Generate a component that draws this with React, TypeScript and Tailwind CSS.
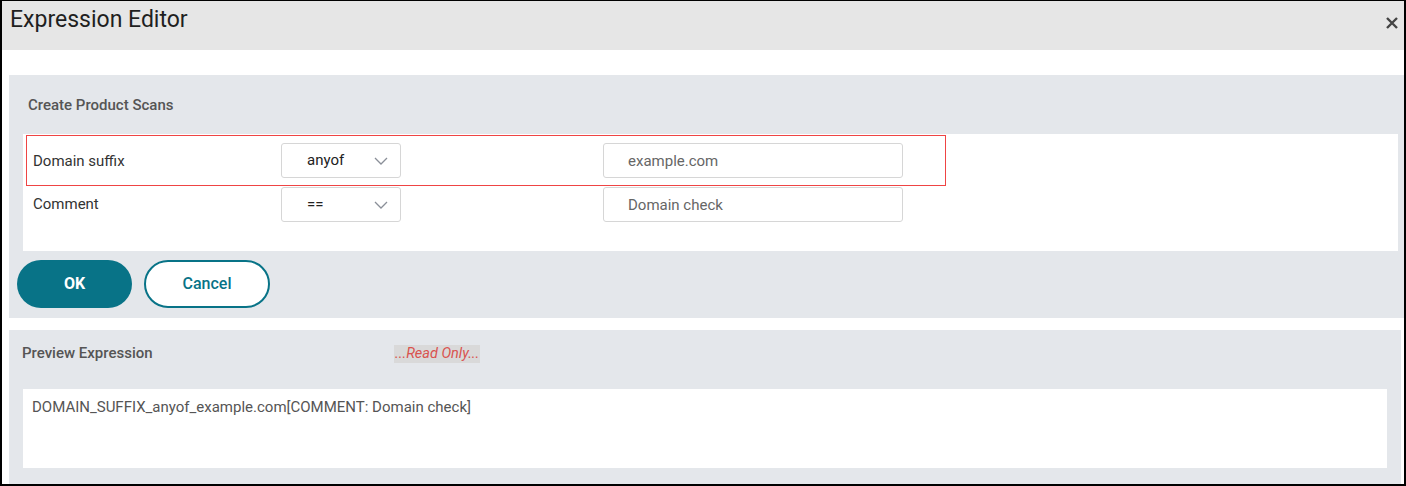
function Chevron() {
  return (
    <svg width="14" height="8" viewBox="0 0 14 8" fill="none" className="text-[#8a8f98]">
      <path d="M1 1l6 6 6-6" stroke="currentColor" strokeWidth="1.3" />
    </svg>
  );
}

function Select({ value }: { value: string }) {
  return (
    <div className="w-[120px] h-[35px] border border-[#d6d6d6] rounded-[3px] bg-white flex items-center justify-between pl-[25px] pr-[12px] text-[15px] text-[#222]">
      <span>{value}</span>
      <Chevron />
    </div>
  );
}

function Field({ value }: { value: string }) {
  return (
    <div className="w-[300px] h-[35px] border border-[#d6d6d6] rounded-[3px] bg-white flex items-center pl-[24px] pt-[2px] text-[15px] text-[#666]">
      {value}
    </div>
  );
}

export default function App() {
  return (
    <div
      className="w-[1406px] h-[486px] bg-white border-l-2 border-t border-r-2 border-b-2 border-black flex flex-col"
      style={{ fontFamily: "Roboto, 'Noto Sans', sans-serif" }}
    >
      {/* Header */}
      <div className="h-[49px] bg-[#e6e6e6] flex items-start justify-between pl-[8px] pr-[6px]">
        <h1 className="text-[23px] leading-none mt-[7px] text-[#1f1f1f]">Expression Editor</h1>
        <svg width="12" height="12" viewBox="0 0 12 12" className="mt-[16px]">
          <path d="M1 1l10 10M11 1L1 11" stroke="#444" strokeWidth="2.4" />
        </svg>
      </div>

      {/* Create section */}
      <div className="mt-[25px] ml-[7px] h-[243px] bg-[#e4e7eb] flex flex-col">
        <div className="h-[59px] pl-[19px] pt-[19px] text-[15px] font-medium text-[#555]">Create Product Scans</div>
        <div className="ml-[14px] mr-[6px] h-[117px] bg-white pt-[1px] pl-[3px]">
          <div className="w-[920px] h-[51px] border border-[#ef4444] flex items-center pl-[6px]">
            <div className="w-[248px] text-[15px] text-[#333] pt-[1px]">Domain suffix</div>
            <Select value="anyof" />
            <div className="ml-[202px]">
              <Field value="example.com" />
            </div>
          </div>
          <div className="flex items-center pl-[7px] mt-[1px] h-[35px]">
            <div className="w-[248px] text-[15px] text-[#333]">Comment</div>
            <Select value="==" />
            <div className="ml-[202px]">
              <Field value="Domain check" />
            </div>
          </div>
        </div>
        <div className="flex gap-[12px] ml-[8px] mt-[9px]">
          <button className="w-[115px] h-[48px] rounded-full bg-[#087387] text-white font-bold text-[16px]">OK</button>
          <button className="w-[126px] h-[48px] rounded-full border-2 border-[#087387] bg-white text-[#087387] font-medium text-[16px]">Cancel</button>
        </div>
      </div>

      {/* Preview section */}
      <div className="mt-[12px] ml-[7px] mr-[3px] flex-1 bg-[#e4e7eb] flex flex-col">
        <div className="h-[59px] flex items-center pl-[13px] pb-[12px]">
          <div className="w-[372px] text-[15px] font-medium text-[#555]">Preview Expression</div>
          <div className="bg-[#d9d9d9] text-[#d9534f] italic text-[14.5px] px-[1px] h-[18px] leading-[18px]">...Read Only...</div>
        </div>
        <div className="ml-[14px] mr-[14px] h-[79px] bg-white pl-[9px] pt-[7px] text-[15px] text-[#555]">
          DOMAIN_SUFFIX_anyof_example.com[COMMENT: Domain check]
        </div>
      </div>
    </div>
  );
}
